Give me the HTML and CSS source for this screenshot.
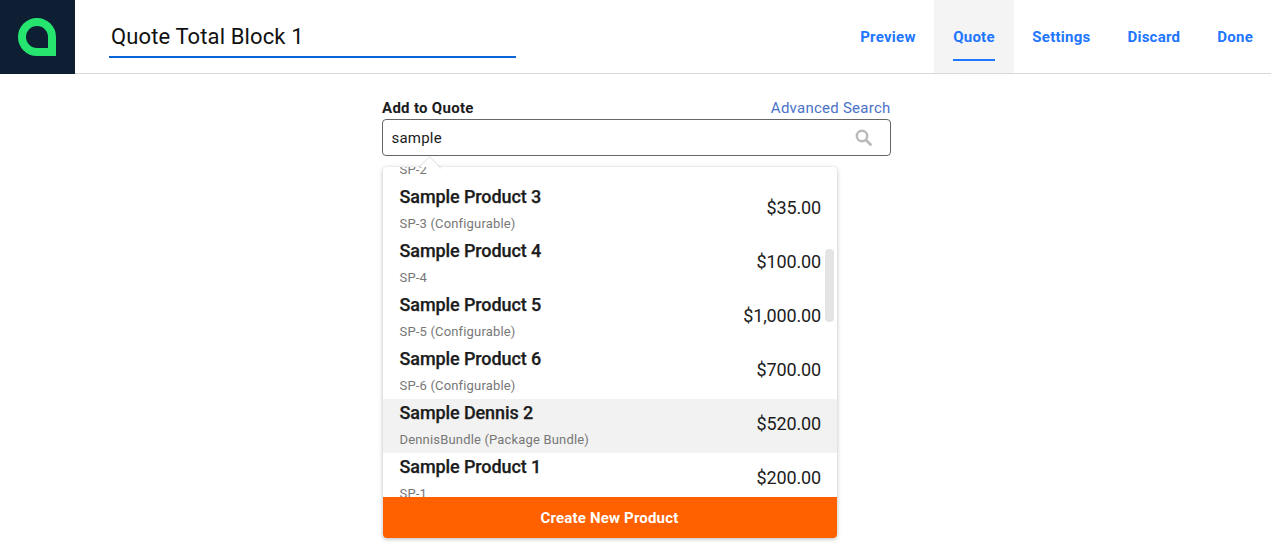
FILE: index.html
```html
<!DOCTYPE html>
<html lang="en">
<head>
<meta charset="utf-8">
<title>Quote Total Block 1</title>
<link rel="stylesheet" href="styles.css">
</head>
<body>
<header class="topbar">
  <div class="logo">
    <svg width="40" height="40" viewBox="0 0 40 40" aria-hidden="true"><path d="M20 5 A15 15 0 0 1 35 20 V35 H20 A15 15 0 0 1 20 5 Z" fill="none" stroke="#25e56f" stroke-width="8"/></svg>
  </div>
  <div class="title-wrap"><div class="title">Quote Total Block 1</div></div>
  <nav class="nav">
    <a class="nav-item">Preview</a>
    <a class="nav-item active">Quote</a>
    <a class="nav-item">Settings</a>
    <a class="nav-item">Discard</a>
    <a class="nav-item">Done</a>
  </nav>
</header>
<main class="main">
  <section class="search">
    <div class="search-head">
      <label class="search-label">Add to Quote</label>
      <a class="advanced">Advanced Search</a>
    </div>
    <div class="search-box">
      <span class="search-text">sample</span>
      <svg class="search-icon" width="17" height="17" viewBox="0 0 17 17" aria-hidden="true"><circle cx="7" cy="7" r="5.2" fill="none" stroke="#b9b9b9" stroke-width="2.4"/><path d="M11 11 L15.5 15.5" stroke="#b9b9b9" stroke-width="2.8" stroke-linecap="round"/></svg>
    </div>
    <div class="dropdown">
      <span class="caret"></span>
      <div class="list">
        <div class="rows">
          <div class="row"><div class="info"><div class="name">Sample Product 2</div><div class="sku">SP-2</div></div><div class="price">$50.00</div></div>
          <div class="row"><div class="info"><div class="name">Sample Product 3</div><div class="sku">SP-3 (Configurable)</div></div><div class="price">$35.00</div></div>
          <div class="row"><div class="info"><div class="name">Sample Product 4</div><div class="sku">SP-4</div></div><div class="price">$100.00</div></div>
          <div class="row"><div class="info"><div class="name">Sample Product 5</div><div class="sku">SP-5 (Configurable)</div></div><div class="price">$1,000.00</div></div>
          <div class="row"><div class="info"><div class="name">Sample Product 6</div><div class="sku">SP-6 (Configurable)</div></div><div class="price">$700.00</div></div>
          <div class="row hover"><div class="info"><div class="name">Sample Dennis 2</div><div class="sku">DennisBundle (Package Bundle)</div></div><div class="price">$520.00</div></div>
          <div class="row"><div class="info"><div class="name">Sample Product 1</div><div class="sku">SP-1</div></div><div class="price">$200.00</div></div>
        </div>
        <span class="scrollbar"></span>
      </div>
      <button class="create">Create New Product</button>
    </div>
  </section>
</main>
</body>
</html>
```
FILE: styles.css
```css
* { box-sizing: border-box; }
html, body { margin: 0; padding: 0; }
body { font-family: Roboto, "Liberation Sans", sans-serif; background: #fff; color: #1c1c1c; height: 554px; overflow: hidden; }

.topbar { display: flex; height: 74px; border-bottom: 1px solid #d9d9d9; }
.logo { width: 75px; height: 74px; background: #0e1f33; display: flex; align-items: center; justify-content: center; flex: none; padding-right: 2px; padding-bottom: 1px; }
.title-wrap { flex: none; margin-left: 34px; width: 407px; height: 58px; border-bottom: 2px solid #0a66d8; display: flex; align-items: flex-end; padding: 0 0 3px 2px; }
.title { font-size: 22px; line-height: 32px; color: #111; letter-spacing: 0.12px; }
.nav { margin-left: auto; display: flex; height: 74px; margin-right: -0.5px; }
.nav-item { position: relative; display: flex; align-items: center; padding: 0 18.5px; font-size: 15px; font-weight: 700; color: #2176ff; height: 73px; letter-spacing: 0.25px; }
.nav-item.active { background: #f4f4f4; padding: 0 19px; }
.nav-item.active::after { content: ""; position: absolute; left: 19px; right: 19px; top: 59px; height: 2px; background: #2176ff; }

.main { display: flex; justify-content: center; padding-top: 24px; }
.search { width: 509px; margin-left: 1px; }
.search-head { display: flex; justify-content: space-between; align-items: center; height: 20px; }
.search-label { font-size: 15px; font-weight: 700; color: #1c1c1c; letter-spacing: 0.3px; margin-left: 0.5px; }
.advanced { font-size: 15px; color: #4a72c8; letter-spacing: 0.25px; }
.search-box { display: flex; align-items: center; justify-content: space-between; height: 37px; margin-top: 1px; border: 1px solid #666; border-radius: 4px; padding: 0 18px 0 9px; }
.search-text { font-size: 15px; color: #1c1c1c; letter-spacing: 0.2px; }
.search-icon { margin-top: 0; }

.dropdown { position: relative; width: 454px; margin-top: 11px; margin-left: 1px; border-radius: 4px; background: #fff; box-shadow: 0 1px 4px rgba(0,0,0,0.28); }
.caret { position: absolute; top: -6px; left: 38px; width: 17px; height: 17px; background: #fff; transform: rotate(45deg); box-shadow: -1px -1px 1px rgba(0,0,0,0.1); }
.list { position: relative; height: 330px; overflow: hidden; border-radius: 4px 4px 0 0; }
.rows { margin-top: -38px; }
.row { display: flex; justify-content: space-between; align-items: center; height: 54px; padding: 0 15.5px 0 17px; }
.row.hover { background: #f2f2f2; }
.name { font-size: 18px; font-weight: 500; line-height: 26px; color: #1c1c1c; letter-spacing: -0.1px; -webkit-text-stroke: 0.25px #1c1c1c; }
.sku { font-size: 13px; line-height: 15px; color: #777; margin-top: 6px; letter-spacing: 0.17px; }
.price { font-size: 18px; color: #1c1c1c; margin-top: -6px; letter-spacing: -0.15px; }
.info { margin-top: -5px; }
.scrollbar { position: absolute; top: 82px; right: 3px; width: 9px; height: 73px; border-radius: 4px; background: #e4e4e4; }
.create { display: block; width: 100%; height: 41px; border: 0; border-radius: 0 0 4px 4px; background: #ff6000; color: #fff; font-family: inherit; font-size: 15px; font-weight: 700; letter-spacing: 0.17px; }
```
